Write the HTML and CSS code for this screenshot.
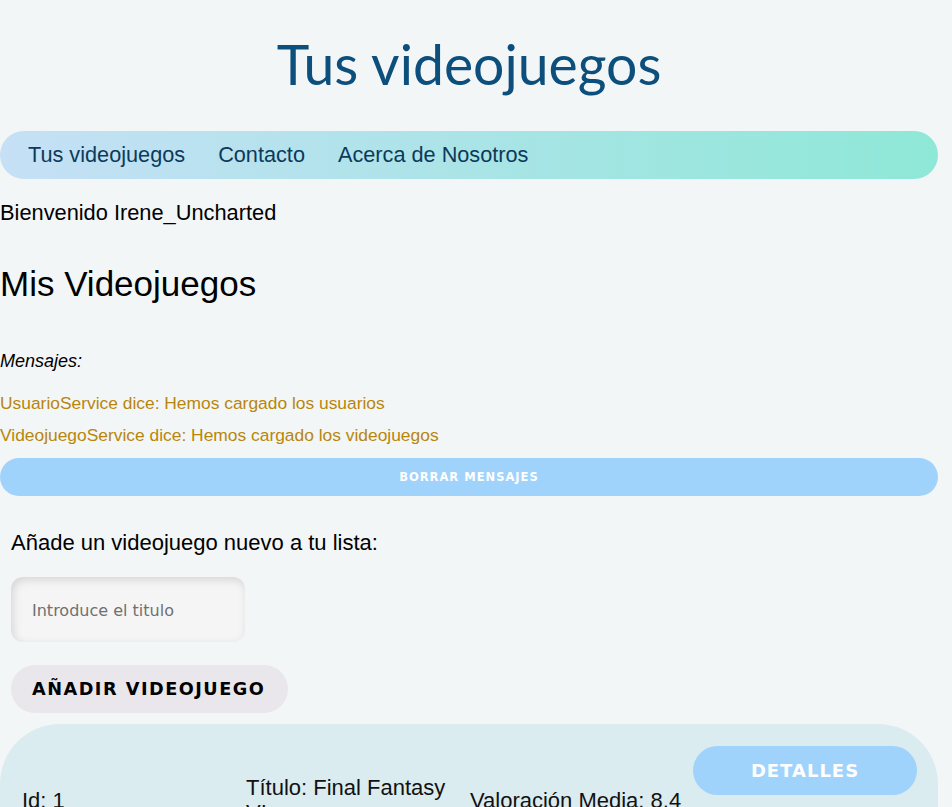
FILE: index.html
```html
<!DOCTYPE html>
<html lang="es">
<head>
<meta charset="utf-8">
<title>Tus videojuegos</title>
<link rel="stylesheet" href="styles.css">
</head>
<body>
<div class="page">
  <h1 class="title">Tus videojuegos</h1>
  <nav class="nav">
    <a href="#">Tus videojuegos</a>
    <a href="#">Contacto</a>
    <a href="#">Acerca de Nosotros</a>
  </nav>
  <p class="welcome">Bienvenido Irene_Uncharted</p>
  <h2 class="section-title">Mis Videojuegos</h2>
  <div class="messages">
    <h4 class="messages-title">Mensajes:</h4>
    <div class="msg">UsuarioService dice: Hemos cargado los usuarios</div>
    <div class="msg">VideojuegoService dice: Hemos cargado los videojuegos</div>
    <button class="btn-clear">BORRAR MENSAJES</button>
  </div>
  <div class="add">
    <label class="add-label">Añade un videojuego nuevo a tu lista:</label>
    <input class="add-input" type="text" placeholder="Introduce el titulo">
    <button class="btn-add">AÑADIR VIDEOJUEGO</button>
  </div>
  <div class="card">
    <div class="cell cell-id">Id: 1</div>
    <div class="cell cell-title">Título: Final Fantasy VI</div>
    <div class="cell cell-rating">Valoración Media: 8.4</div>
    <button class="btn-details">DETALLES</button>
  </div>
</div>
</body>
</html>
```
FILE: styles.css
```css
html, body {
  margin: 0;
  padding: 0;
  background: #f3f6f7;
}
body {
  font-family: "Liberation Sans", Arial, sans-serif;
  color: #000;
}
.page {
  padding-right: 14px;
}
.title {
  margin: 0;
  padding-top: 30px;
  height: 131px;
  box-sizing: border-box;
  text-align: center;
  font-family: Lato, "Open Sans", sans-serif;
  font-weight: 400;
  font-size: 55.3px;
  line-height: 68px;
  color: #0d4f7c;
}
.nav {
  display: flex;
  align-items: center;
  gap: 33px;
  height: 48px;
  padding-left: 28px;
  border-radius: 24px;
  background: linear-gradient(to right, #c6e0f6, #8ee8d7);
}
.nav a {
  font-size: 21.7px;
  color: #0c3a5a;
  text-decoration: none;
}
.welcome {
  margin: 21px 0 0;
  font-size: 21.8px;
  line-height: 26px;
}
.section-title {
  margin: 38px 0 0;
  font-size: 35px;
  font-weight: 400;
  line-height: 40px;
}
.messages-title {
  margin: 47px 0 0;
  font-size: 18px;
  font-style: italic;
  font-weight: 400;
  line-height: 20px;
}
.msg {
  margin-top: 12px;
  font-size: 17.4px;
  line-height: 20px;
  color: #b8860b;
}
.messages-title + .msg {
  margin-top: 22px;
}
.btn-clear {
  display: block;
  width: 100%;
  height: 38px;
  margin-top: 13px;
  border: none;
  border-radius: 19px;
  background: #9fd3fc;
  color: #fff;
  font-family: "DejaVu Sans", Verdana, sans-serif;
  font-weight: 700;
  font-size: 11.5px;
  letter-spacing: 1px;
}
.add {
  display: flex;
  flex-direction: column;
  align-items: flex-start;
  padding-left: 11px;
}
.add-label {
  margin-top: 34px;
  font-size: 22px;
  line-height: 26px;
}
.add-input {
  margin-top: 21px;
  width: 234px;
  height: 65px;
  box-sizing: border-box;
  padding: 2px 21px 0;
  border: none;
  border-radius: 12px;
  background: #f5f5f5;
  box-shadow: inset 2px 3px 10px rgba(0, 0, 0, 0.13);
  font-family: "DejaVu Sans", Verdana, sans-serif;
  font-size: 16px;
  color: #333;
  outline: none;
}
.add-input::placeholder {
  color: #707070;
}
.btn-add {
  margin-top: 23px;
  height: 48px;
  padding: 0 23px 0 21px;
  border: none;
  border-radius: 24px;
  background: #e9e6ec;
  color: #000;
  font-family: "DejaVu Sans", Verdana, sans-serif;
  font-weight: 700;
  font-size: 17.7px;
  letter-spacing: 1.5px;
}
.card {
  margin-top: 11px;
  display: flex;
  align-items: flex-start;
  height: 130px;
  padding: 22px 21px 0 22px;
  border-radius: 60px;
  background: #dbecf0;
}
.cell {
  font-size: 22px;
  line-height: 25px;
  color: #111;
}
.cell-id {
  width: 224px;
  margin-top: 42px;
}
.cell-title {
  width: 224px;
  margin-top: 29px;
}
.cell-rating {
  width: 223px;
  margin-top: 42px;
}
.btn-details {
  width: 224px;
  height: 49px;
  border: none;
  border-radius: 25px;
  background: #9fd3fc;
  color: #fff;
  font-family: "DejaVu Sans", Verdana, sans-serif;
  font-weight: 700;
  font-size: 18px;
  letter-spacing: 1px;
}
```
